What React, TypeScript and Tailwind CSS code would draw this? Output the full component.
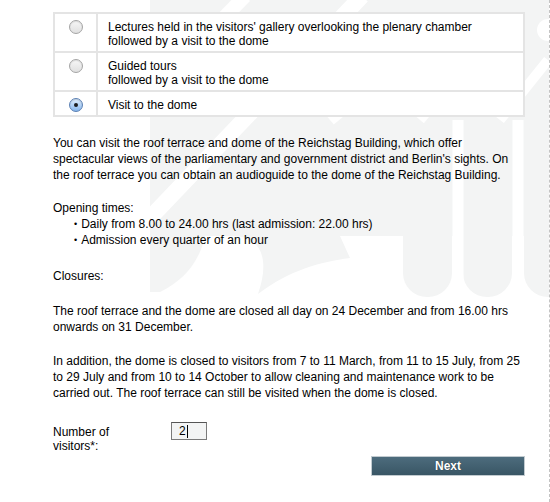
import React from "react";

type Tour = {
  lines: string[];
  selected?: boolean;
};

const tours: Tour[] = [
  {
    lines: [
      "Lectures held in the visitors' gallery overlooking the plenary chamber",
      "followed by a visit to the dome",
    ],
  },
  { lines: ["Guided tours", "followed by a visit to the dome"] },
  { lines: ["Visit to the dome"], selected: true },
];

function Radio({ checked }: { checked?: boolean }) {
  if (checked) {
    return (
      <span className="flex h-[14px] w-[14px] items-center justify-center rounded-full border border-[#5a7fb3] bg-gradient-to-b from-[#e2f0fe] to-[#86b6ec] shadow-[inset_0_1px_1px_rgba(0,0,0,0.15)]">
        <span className="h-[4px] w-[4px] rounded-full bg-[#1c1c1c]" />
      </span>
    );
  }
  return (
    <span className="block h-[14px] w-[14px] rounded-full border border-[#a4a4a4] bg-gradient-to-b from-[#f7f7f7] to-[#e0e0e0] shadow-[inset_0_1px_1px_rgba(0,0,0,0.1)]" />
  );
}

// faint eagle watermark behind the page
function Watermark() {
  const c = "#f3f4f4";
  return (
    <svg
      className="pointer-events-none absolute left-0 top-0"
      width="550"
      height="502"
      viewBox="0 0 550 502"
    >
      <path d="M150 0 H550 V236 H150 Z" fill={c} />
      <rect x="403" y="120" width="49" height="177" rx="24" fill={c} />
      <rect x="463" y="120" width="49" height="177" rx="24" fill={c} />
      <rect x="524" y="120" width="49" height="177" rx="24" fill={c} />
      <path d="M232 236 C262 236 270 260 258 294 C290 270 320 262 350 258 L340 236 Z" fill={c} />
      <path d="M150 236 L205 236 C200 260 185 280 160 292 L150 292 Z" fill={c} />
      <g stroke="#ffffff" strokeLinecap="butt" fill="none">
        <path d="M245 -4 L140 104" strokeWidth="14" />
        <path d="M362 -4 L150 218" strokeWidth="16" />
        <path d="M400 62 L330 120" strokeWidth="12" />
        <path d="M458 120 L458 300" strokeWidth="11" />
        <path d="M518 120 L518 300" strokeWidth="11" />
        <path d="M470 60 L420 120" strokeWidth="10" />
        <path d="M548 60 L500 120" strokeWidth="10" />
      </g>
      <circle cx="548" cy="30" r="11" fill="#ffffff" />
    </svg>
  );
}

function App() {
  return (
    <div className="relative h-[502px] w-[550px] overflow-hidden border-r border-dashed border-[#c4c4c4] bg-white font-['Liberation_Sans',Arial,sans-serif] text-[12px] text-black">
      <Watermark />

      <div className="relative w-[525px] pl-[53px] pt-[12px]">
        <div className="border-2 border-[#e4e4e4] bg-white">
          {tours.map((tour, i) => (
            <div
              key={i}
              className={`flex ${i > 0 ? "border-t-2 border-[#e4e4e4]" : ""}`}
            >
              <div className="flex w-[43px] shrink-0 justify-center border-r-2 border-[#e4e4e4] pt-[6px]">
                <Radio checked={tour.selected} />
              </div>
              <div className="pb-[3px] pl-[10px] pt-[6px] leading-[14px]">
                {tour.lines.map((line) => (
                  <div key={line}>{line}</div>
                ))}
              </div>
            </div>
          ))}
        </div>

        <p className="mt-[18px] leading-[16px]">
          You can visit the roof terrace and dome of the Reichstag Building, which
          offer spectacular views of the parliamentary and government district and
          Berlin's sights. On the roof terrace you can obtain an audioguide to the
          dome of the Reichstag Building.
        </p>

        <div className="mt-[17px] leading-[16px]">
          <p>Opening times:</p>
          <ul className="pl-[21px]">
            <li className="flex items-center gap-[4px]">
              <span className="text-[9px]">•</span>
              <span>Daily from 8.00 to 24.00 hrs (last admission: 22.00 hrs)</span>
            </li>
            <li className="flex items-center gap-[4px]">
              <span className="text-[9px]">•</span>
              <span>Admission every quarter of an hour</span>
            </li>
          </ul>
        </div>

        <p className="mt-[20px] leading-[16px]">Closures:</p>

        <p className="mt-[19px] leading-[16px]">
          The roof terrace and the dome are closed all day on 24 December and from
          16.00 hrs onwards on 31 December.
        </p>

        <p className="mt-[18px] leading-[16px]">
          In addition, the dome is closed to visitors from 7 to 11 March, from 11 to
          15 July, from 25 to 29 July and from 10 to 14 October to allow cleaning and
          maintenance work to be carried out. The roof terrace can still be visited
          when the dome is closed.
        </p>

        <div className="mt-[21px] flex items-start">
          <label className="w-[118px] pt-[3px] leading-[14px]">
            Number of
            <br />
            visitors*:
          </label>
          <div className="flex h-[18px] w-[36px] items-center border border-[#7a7a7a] border-t-[#555] bg-[#f3f4f4] pl-[7px] leading-none">
            <span>2</span>
            <span className="ml-[1px] h-[13px] w-px bg-black" />
          </div>
        </div>

        <div className="mt-[3px] flex justify-end">
          <button
            type="button"
            className="h-[20px] w-[154px] border border-[#c2cbd0] bg-gradient-to-b from-[#4d6c7d] to-[#395665] text-[12px] font-bold leading-none text-white [text-shadow:0_0_1px_rgba(0,0,0,0.6)]"
          >
            Next
          </button>
        </div>
      </div>
    </div>
  );
}

export default App;
